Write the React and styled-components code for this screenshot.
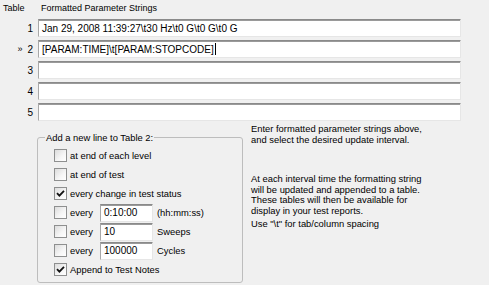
import React from "react";
import styled, { createGlobalStyle } from "styled-components";

const Global = createGlobalStyle`
  html, body { margin: 0; padding: 0; background: #f0f0f0; }
  * { box-sizing: border-box; }
`;

const Window = styled.div`
  width: 489px;
  height: 285px;
  background: #f0f0f0;
  font-family: "Liberation Sans", Arial, sans-serif;
  color: #000;
  overflow: hidden;
  padding-top: 3px;
`;

const TableGrid = styled.div`
  display: grid;
  grid-template-columns: 38px 423px;
  row-gap: 3px;
  align-items: center;
`;

const HeadCell = styled.div`
  font-size: 9px;
  line-height: 11px;
  padding-left: ${(p) => p.$pad}px;
  margin-bottom: 2px;
`;

const RowNum = styled.div`
  display: flex;
  justify-content: flex-end;
  align-items: center;
  gap: 5px;
  padding-right: 5px;
  font-size: 10px;
`;

const Marker = styled.span`
  font-size: 9px;
`;

const Field = styled.div`
  display: flex;
  align-items: center;
  height: ${(p) => p.$h || 18}px;
  width: ${(p) => (p.$w ? `${p.$w}px` : "auto")};
  background: #fff;
  border-style: solid;
  border-width: 1px;
  border-color: #8a8a8a #e6e6e6 #e6e6e6 #a8a8a8;
  box-shadow: inset 0 1px 0 #9a9a9a;
  padding-left: 3px;
  font-size: 10px;
  white-space: pre;
  overflow: hidden;
`;

const Caret = styled.span`
  display: inline-block;
  width: 1px;
  height: 12px;
  background: #000;
  margin-left: 1px;
`;

const Bottom = styled.div`
  display: flex;
  align-items: flex-start;
  margin-top: 1px;
`;

const Group = styled.fieldset`
  margin: 10px 0 0 37px;
  width: 206px;
  height: 151px;
  border: 1px solid #bdbdbd;
  border-radius: 3px;
  padding: 3px 0 0 16px;
  min-width: 0;
`;

const Legend = styled.legend`
  font-size: 9.4px;
  line-height: 11px;
  padding: 0 1px;
  margin-left: -9px;
`;

const OptionList = styled.div`
  display: flex;
  flex-direction: column;
`;

const Option = styled.div`
  display: flex;
  align-items: center;
  height: 19px;
  font-size: 9.4px;
`;

const Box = styled.span`
  display: inline-flex;
  align-items: center;
  justify-content: center;
  width: 13px;
  height: 13px;
  border: 1px solid #8e8f8f;
  background: linear-gradient(135deg, #dcdcdc 0%, #f6f6f6 60%, #ffffff 100%);
  margin-right: 3px;
  flex: none;
`;

const EveryLabel = styled.span`
  width: 30px;
`;

const Unit = styled.span`
  margin-left: 4px;
`;

const Help = styled.div`
  margin-left: 8px;
  padding-top: 2px;
  font-size: 9.4px;
  line-height: 10.5px;
`;

const Para = styled.p`
  margin: 0 0 ${(p) => p.$mb || 0}px 0;
`;

function Check({ checked }) {
  return (
    <Box>
      {checked && (
        <svg width="9" height="9" viewBox="0 0 9 9">
          <path d="M1 4.2 L3.4 6.6 L8 1.8" stroke="#111" strokeWidth="1.8" fill="none" />
        </svg>
      )}
    </Box>
  );
}

const rows = [
  { n: 1, text: "Jan 29, 2008 11:39:27\\t30 Hz\\t0 G\\t0 G\\t0 G" },
  { n: 2, text: "[PARAM:TIME]\\t[PARAM:STOPCODE]", current: true },
  { n: 3, text: "" },
  { n: 4, text: "" },
  { n: 5, text: "" },
];

export default function App() {
  return (
    <Window>
      <Global />
      <TableGrid>
        <HeadCell $pad={3}>Table</HeadCell>
        <HeadCell $pad={3}>Formatted Parameter Strings</HeadCell>
        {rows.map((r) => (
          <React.Fragment key={r.n}>
            <RowNum>
              {r.current && <Marker>»</Marker>}
              <span>{r.n}</span>
            </RowNum>
            <Field>
              {r.text}
              {r.current && <Caret />}
            </Field>
          </React.Fragment>
        ))}
      </TableGrid>
      <Bottom>
        <Group>
          <Legend>Add a new line to Table 2:</Legend>
          <OptionList>
            <Option><Check />at end of each level</Option>
            <Option><Check />at end of test</Option>
            <Option><Check checked />every change in test status</Option>
            <Option>
              <Check /><EveryLabel>every</EveryLabel>
              <Field $w={53}>0:10:00</Field><Unit>(hh:mm:ss)</Unit>
            </Option>
            <Option>
              <Check /><EveryLabel>every</EveryLabel>
              <Field $w={53}>10</Field><Unit>Sweeps</Unit>
            </Option>
            <Option>
              <Check /><EveryLabel>every</EveryLabel>
              <Field $w={53}>100000</Field><Unit>Cycles</Unit>
            </Option>
            <Option><Check checked />Append to Test Notes</Option>
          </OptionList>
        </Group>
        <Help>
          <Para $mb={29}>
            Enter formatted parameter strings above,
            <br />
            and select the desired update interval.
          </Para>
          <Para $mb={3}>
            At each interval time the formatting string
            <br />
            will be updated and appended to a table.
            <br />
            These tables will then be available for
            <br />
            display in your test reports.
          </Para>
          <Para>Use "\t" for tab/column spacing</Para>
        </Help>
      </Bottom>
    </Window>
  );
}
